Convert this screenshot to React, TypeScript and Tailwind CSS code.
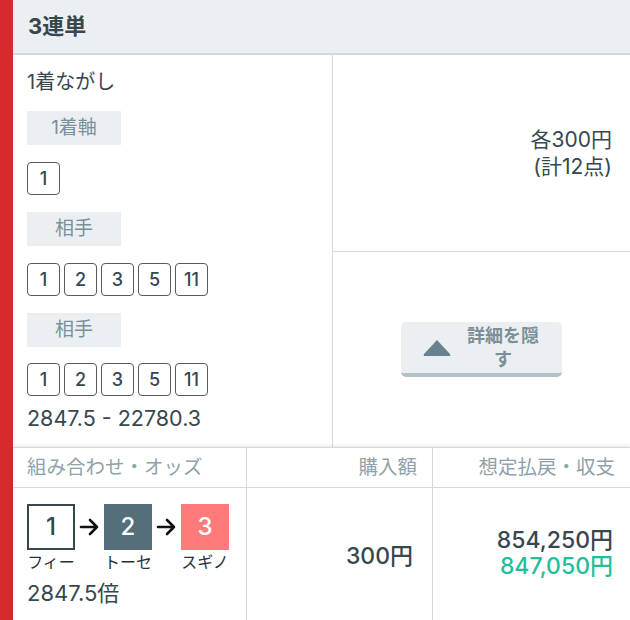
import { ReactNode } from "react";

const font = { fontFamily: 'Inter, "Noto Sans CJK JP", sans-serif' };

const others = ["1", "2", "3", "5", "11"];

function Label({ children }: { children: ReactNode }) {
  return (
    <div className="flex h-[34px] w-[94px] items-center justify-center bg-[#eceff1] text-[19px] text-[#7b8f99]">
      {children}
    </div>
  );
}

function NumRow({ nums }: { nums: string[] }) {
  return (
    <div className="flex gap-[4px]">
      {nums.map((n, i) => (
        <div
          key={i}
          className="flex h-[33px] w-[33px] items-center justify-center rounded-[4px] border border-[#555b5e] text-[18px] font-medium text-[#37474f]"
        >
          {n}
        </div>
      ))}
    </div>
  );
}

function Horse({ num, name, cls }: { num: string; name: string; cls: string }) {
  return (
    <div className="flex w-[48px] flex-col items-center">
      <div className={`flex h-[46px] w-[48px] items-center justify-center text-[24px] font-medium ${cls}`}>
        {num}
      </div>
      <div className="mt-[2px] whitespace-nowrap text-[16px] leading-[20px] text-[#263238]">{name}</div>
    </div>
  );
}

function Arrow() {
  return (
    <svg width="29" height="46" viewBox="0 0 29 46" className="shrink-0">
      <path d="M6 23h16M15 16l7 7-7 7" fill="none" stroke="#111" strokeWidth="2.6" strokeLinecap="round" strokeLinejoin="round" />
    </svg>
  );
}

export default function App() {
  return (
    <div style={font} className="flex h-[620px] w-[630px] overflow-hidden bg-white text-[#37474f]">
      {/* red accent bar */}
      <div className="w-[13px] shrink-0 bg-[#d62a2c]" />

      <div className="flex min-w-0 flex-1 flex-col">
        {/* Header */}
        <div className="flex h-[55px] shrink-0 items-center border-b-2 border-[#d3d9dc] bg-[#eceff1] px-[15px] text-[22px] font-bold text-[#37474f]">
          3連単
        </div>

        {/* Detail */}
        <div className="flex">
          <div className="w-[320px] shrink-0 border-r border-[#d3d9dc] pb-[15px] pl-[14px] pt-[13px]">
            <div className="text-[20px] leading-[28px] text-[#37474f]">1着ながし</div>
            <div className="mt-[15px]">
              <Label>1着軸</Label>
            </div>
            <div className="mt-[17px]">
              <NumRow nums={["1"]} />
            </div>
            <div className="mt-[17px]">
              <Label>相手</Label>
            </div>
            <div className="mt-[17px]">
              <NumRow nums={others} />
            </div>
            <div className="mt-[17px]">
              <Label>相手</Label>
            </div>
            <div className="mt-[16px]">
              <NumRow nums={others} />
            </div>
            <div className="mt-[8px] text-[21.5px] leading-[28px] text-[#37474f]">2847.5 - 22780.3</div>
          </div>

          <div className="flex flex-1 flex-col">
            <div className="flex h-[197px] items-center justify-end border-b border-[#d3d9dc] pr-[18px]">
              <div className="text-right text-[21px] leading-[27px] text-[#37474f]">
                各300円
                <br />
                (計12点)
              </div>
            </div>
            <div className="flex flex-1 items-center justify-center">
              <button className="flex h-[55px] w-[161px] items-center rounded-[5px] border-b-[4px] border-[#b4c0c6] bg-[#eceff1] pl-[21px] pr-[20px]">
                <svg width="30" height="19" viewBox="0 0 30 19" className="shrink-0">
                  <path d="M15 2 L28 16 Q29 18 27 18 L3 18 Q1 18 2 16 Z" fill="#688290" />
                </svg>
                <span className="ml-[12px] flex-1 text-center text-[18px] font-bold leading-[24px] text-[#7b8f99]">
                  詳細を隠す
                </span>
              </button>
            </div>
          </div>
        </div>

        {/* Table */}
        <div className="border-t border-[#d3d9dc] shadow-[0_-2px_3px_rgba(0,0,0,0.08)]">
          <div className="flex h-[40px] border-b border-[#d3d9dc] text-[19.5px] text-[#8fa1ab]">
            <div className="flex w-[234px] items-center whitespace-nowrap border-r border-[#d3d9dc] pl-[14px]">組み合わせ・オッズ</div>
            <div className="flex w-[186px] items-center justify-end border-r border-[#d3d9dc] pr-[15px]">購入額</div>
            <div className="flex flex-1 items-center justify-end whitespace-nowrap pr-[15px]">想定払戻・収支</div>
          </div>
          <div className="flex h-[140px]">
            <div className="w-[234px] border-r border-[#d3d9dc] pl-[14px] pt-[16px]">
              <div className="flex">
                <Horse num="1" name="フィー" cls="border-2 border-[#37474f] bg-white text-[#37474f]" />
                <Arrow />
                <Horse num="2" name="トーセ" cls="bg-[#546e7a] text-white" />
                <Arrow />
                <Horse num="3" name="スギノ" cls="bg-[#ff7b7b] text-white" />
              </div>
              <div className="mt-[7px] text-[22px] leading-[28px] text-[#37474f]">2847.5倍</div>
            </div>
            <div className="flex w-[186px] items-start justify-end border-r border-[#d3d9dc] pr-[19px] pt-[51px] text-[23px] font-medium">
              300円
            </div>
            <div className="flex flex-1 flex-col items-end pr-[17px] pt-[39px] text-[23px] font-medium leading-[26px]">
              <div className="text-[#37474f]">854,250円</div>
              <div className="text-[#1fbf9c]">847,050円</div>
            </div>
          </div>
        </div>
      </div>
    </div>
  );
}
